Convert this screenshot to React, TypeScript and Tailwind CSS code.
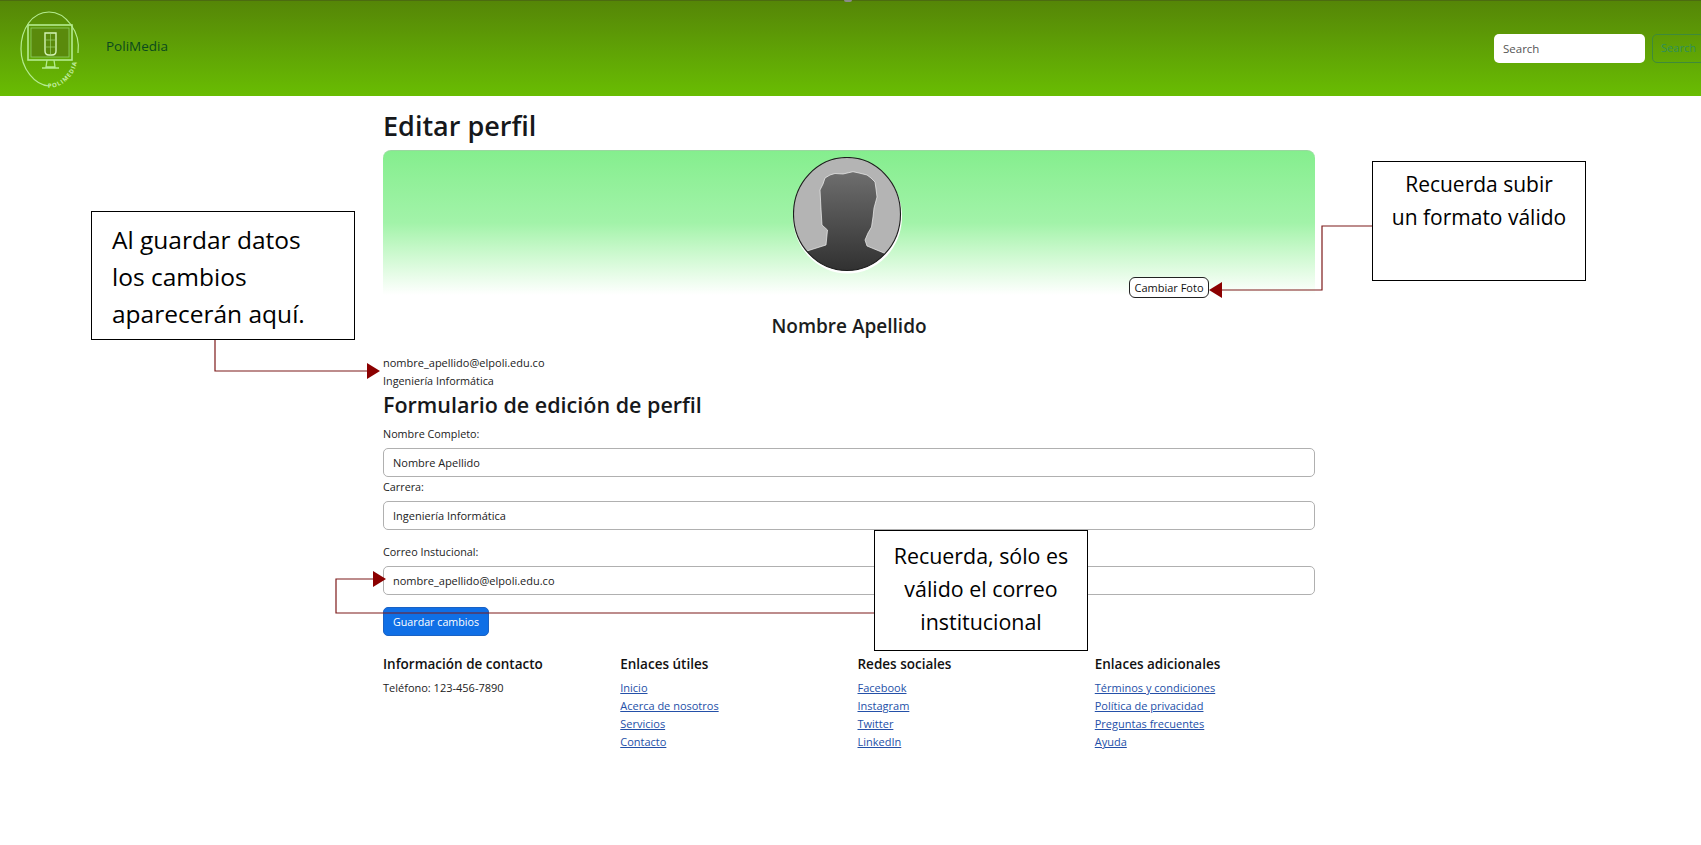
import React from "react";

const font = "font-['Open_Sans',sans-serif]";

const Logo = () => (
    <svg width="64" height="80" viewBox="0 0 64 80" fill="none" className="shrink-0">
        <path d="M59 44 C62 22 46 3 30 3 C13 3 2 20 2 40 C2 60 16 76 30 77" stroke="#b5ec90" strokeWidth="1.2" />
        <rect x="9" y="16" width="44" height="35" stroke="#b5ec90" strokeWidth="1.6" />
        <rect x="12" y="19" width="38" height="29" fill="#5a8a0c" stroke="#8fd068" strokeWidth="0.8" />
        <path d="M26 24 H37 V42 Q37 46 33 46 H30 Q26 46 26 42 Z" stroke="#d5f5b8" strokeWidth="1.4" />
        <path d="M26 31 H37 M26 38 H37 M31.500 24 V46" stroke="#a5dd80" strokeWidth="0.6" />
        <path d="M28 51 L27 58 H36 L35 51 M23 59 H40" stroke="#b5ec90" strokeWidth="1.3" />
        <path id="logoArc" d="M29 79 C44 79 58 66 59 46" />
        <text fontSize="6" fontWeight="700" fill="#c5f0a5" letterSpacing="1" fontFamily="Open Sans, sans-serif">
            <textPath href="#logoArc">POLIMEDIA</textPath>
        </text>
    </svg>
);

const Avatar = () => (
    <svg width="110" height="118" viewBox="0 0 110 118" className="ml-[-2px] shrink-0">
        <defs>
            <linearGradient id="head" x1="0" y1="0" x2="0" y2="1">
                <stop offset="0" stopColor="#6e6e6e" />
                <stop offset="1" stopColor="#2e2e2e" />
            </linearGradient>
            <clipPath id="face">
                <ellipse cx="54" cy="57" rx="53.500" ry="56.500" />
            </clipPath>
        </defs>
        <ellipse cx="54.500" cy="59.500" rx="54.500" ry="57" fill="#ffffff" />
        <ellipse cx="54" cy="57" rx="53.500" ry="56.500" fill="#b4b4b4" />
        <g clipPath="url(#face)">
            <path
                d="M0 104 L14 94 L33 88 L34.500 73 L29 68 L28 52 L27 33 L30 27 L32 21 L37 18 L42 16.500 L50 17 L60 14.700 L66 16 L74 18 L78 21 L82 25 L83 32 L84 40 L81 51 L80 60 L78.500 70 L75 76 L72 83 L74 89 L91 96 L110 106 L110 118 L0 118 Z"
                fill="url(#head)"
                stroke="#f0f0f0"
                strokeWidth="0.7"
                strokeLinejoin="round"
            />
        </g>
        <ellipse cx="54" cy="57" rx="53.500" ry="56.500" fill="none" stroke="#1c1c1c" strokeWidth="1.1" />
    </svg>
);

const Field = ({ label, value, className }: { label: string; value: string; className: string }) => (
    <div className={className}>
        <label className="block text-[10.800px] leading-[18px] text-[#222]">{label}</label>
        <input
            readOnly
            value={value}
            className="mt-[5px] block h-[29px] w-full rounded-[5px] border-[1.5px] border-[#b0b0b0] bg-white px-[9px] text-[11px] text-[#222] outline-none"
        />
    </div>
);

const FooterCol = ({ title, links }: { title: string; links: string[] }) => (
    <div>
        <h5 className="text-[13.500px] font-semibold leading-[20px] text-[#111]">{title}</h5>
        <ul className="mt-[5px]">
            {links.map((link) => (
                <li key={link} className="text-[11px] leading-[18px]">
                    <a href="#" className="text-[#2450a8] underline">
                        {link}
                    </a>
                </li>
            ))}
        </ul>
    </div>
);

const Callout = ({ className, children }: { className: string; children: React.ReactNode }) => (
    <div className={`absolute border border-black bg-white text-black ${className}`}>{children}</div>
);

// flechas rojas de las anotaciones, encima de la pagina
const Arrows = () => (
    <svg width="1701" height="845" viewBox="0 0 1701 845" fill="none" className="pointer-events-none absolute left-0 top-0">
        <path d="M215 339 V371 H368" stroke="#7d1a1a" strokeWidth="1.2" />
        <path d="M367 363 L380 371 L367 379 Z" fill="#8b0000" />
        <path d="M1372 226 H1322 V290 H1220" stroke="#7d1a1a" strokeWidth="1.2" />
        <path d="M1222 282 L1209 290 L1222 298 Z" fill="#8b0000" />
        <path d="M874 613 H336 V579 H375" stroke="#7d1a1a" strokeWidth="1.2" />
        <path d="M373 571 L386 579 L373 587 Z" fill="#8b0000" />
    </svg>
);

export default function App() {
    return (
        <div className={`relative h-[845px] w-[1701px] overflow-hidden bg-white ${font}`}>
            <header className="flex h-[96px] items-center border-t border-[#4c6b10] bg-gradient-to-b from-[#558607] to-[#69bd02] pl-[19px]">
                <Logo />
                <span className="ml-[23px] mb-[5px] text-[13.500px] text-[#0b4a1e]">PoliMedia</span>
                <div className="ml-auto mr-[-4px] flex gap-[7px]">
                    <input
                        readOnly
                        placeholder="Search"
                        className="h-[29px] w-[151px] rounded-[5px] bg-white px-[9px] text-[11.500px] outline-none placeholder:text-[#555]"
                    />
                    <button className="h-[29px] w-[53px] rounded-[5px] border-[1.5px] border-[#3f8a3a] text-center text-[11px] text-[#2f8f5a]">
                        Search
                    </button>
                </div>
            </header>
            <span className="absolute left-[844px] top-0 h-[2px] w-[8px] rounded-b-full bg-[#8a8a8a]" />

            <main className="ml-[383px] w-[932px]">
                <h1 className="pb-[6px] pt-[12px] text-[27px] font-semibold leading-[36px] text-[#16181b]">Editar perfil</h1>
                <div className="relative flex h-[145px] justify-center rounded-t-[8px] border-t border-[#9ad8a0] bg-gradient-to-b from-[#85ee8e] via-[#a2f3a9] via-50% to-white pt-[6px]">
                    <Avatar />
                    <button className="absolute left-[746px] top-[126px] h-[21px] w-[80px] rounded-[6px] border border-[#222] bg-white text-[11px] leading-none text-[#111]">
                        Cambiar Foto
                    </button>
                </div>
                <h4 className="mt-[19px] text-center text-[19px] font-semibold leading-[24px] text-[#1b1d20]">Nombre Apellido</h4>
                <p className="mt-[16px] text-[11px] leading-[18px] text-[#222]">nombre_apellido@elpoli.edu.co</p>
                <p className="text-[10.800px] leading-[18px] text-[#222]">Ingeniería Informática</p>
                <h3 className="text-[21.500px] font-semibold leading-[30px] text-[#16181b]">Formulario de edición de perfil</h3>
                <form>
                    <Field className="mt-[5px]" label="Nombre Completo:" value="Nombre Apellido" />
                    <Field className="mt-[1px]" label="Carrera:" value="Ingeniería Informática" />
                    <Field className="mt-[13px]" label="Correo Instucional:" value="nombre_apellido@elpoli.edu.co" />
                    <button
                        type="button"
                        className="mt-[12px] block h-[29px] w-[106px] rounded-[5px] border border-[#1a62c4] bg-[#0f6fe6] pt-[2px] text-[10.700px] text-white"
                    >
                        Guardar cambios
                    </button>
                </form>
                <footer className="mt-[18px] grid w-[949px] grid-cols-4">
                    <div>
                        <h5 className="text-[13.500px] font-semibold leading-[20px] text-[#111]">Información de contacto</h5>
                        <p className="mt-[5px] text-[11px] leading-[18px] text-[#222]">Teléfono: 123-456-7890</p>
                    </div>
                    <FooterCol title="Enlaces útiles" links={["Inicio", "Acerca de nosotros", "Servicios", "Contacto"]} />
                    <FooterCol title="Redes sociales" links={["Facebook", "Instagram", "Twitter", "LinkedIn"]} />
                    <FooterCol
                        title="Enlaces adicionales"
                        links={["Términos y condiciones", "Política de privacidad", "Preguntas frecuentes", "Ayuda"]}
                    />
                </footer>
            </main>

            <Arrows />
            <Callout className="left-[91px] top-[211px] h-[129px] w-[264px] pl-[20px] pt-[9px] text-[24.500px] leading-[37px]">
                Al guardar datos
                <br />
                los cambios
                <br />
                aparecerán aquí.
            </Callout>
            <Callout className="left-[1372px] top-[161px] h-[120px] w-[214px] pt-[6px] text-center text-[21px] leading-[33px]">
                Recuerda subir
                <br />
                un formato válido
            </Callout>
            <Callout className="left-[874px] top-[530px] h-[121px] w-[214px] pt-[8px] text-center text-[21.400px] leading-[33px]">
                Recuerda, sólo es
                <br />
                válido el correo
                <br />
                institucional
            </Callout>
        </div>
    );
}
